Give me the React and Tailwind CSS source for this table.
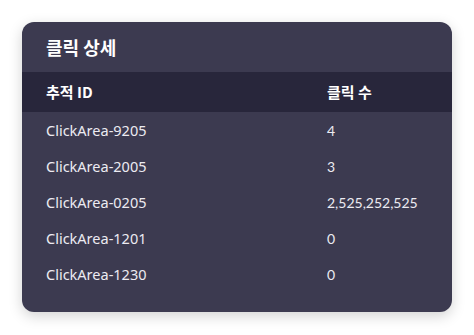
const rows = [
  { id: "ClickArea-9205", count: "4" },
  { id: "ClickArea-2005", count: "3" },
  { id: "ClickArea-0205", count: "2,525,252,525" },
  { id: "ClickArea-1201", count: "0" },
  { id: "ClickArea-1230", count: "0" },
];

export default function App() {
  return (
    <div className="w-[474px] h-[335px] bg-white pt-[22px] pl-[22px] font-['Lato','Noto_Sans_CJK_KR',sans-serif]">
      <div className="w-[430px] h-[290px] rounded-[12px] bg-[#3c3a50] shadow-[0_4px_14px_rgba(0,0,0,0.18)] overflow-hidden text-white">
        {/* title */}
        <div className="h-[50px] flex items-center px-6">
          <h2 className="text-[18px] font-bold font-['Noto_Sans_CJK_KR',sans-serif]">클릭 상세</h2>
        </div>

        {/* header row */}
        <div className="h-[40px] bg-[#28263b] grid grid-cols-[281px_1fr] items-center px-6 text-[15px] font-bold font-['Noto_Sans_CJK_KR',sans-serif]">
          <span>추적 ID</span>
          <span>클릭 수</span>
        </div>

        {/* body */}
        {rows.map((r) => (
          <div key={r.id} className="h-[36px] grid grid-cols-[281px_1fr] content-center items-baseline px-6 text-[#ecebf2] leading-[20px]">
            <span className="text-[14.5px] font-['Noto_Sans',sans-serif]">{r.id}</span>
            <span className="text-[14px]">{r.count}</span>
          </div>
        ))}
      </div>
    </div>
  );
}
